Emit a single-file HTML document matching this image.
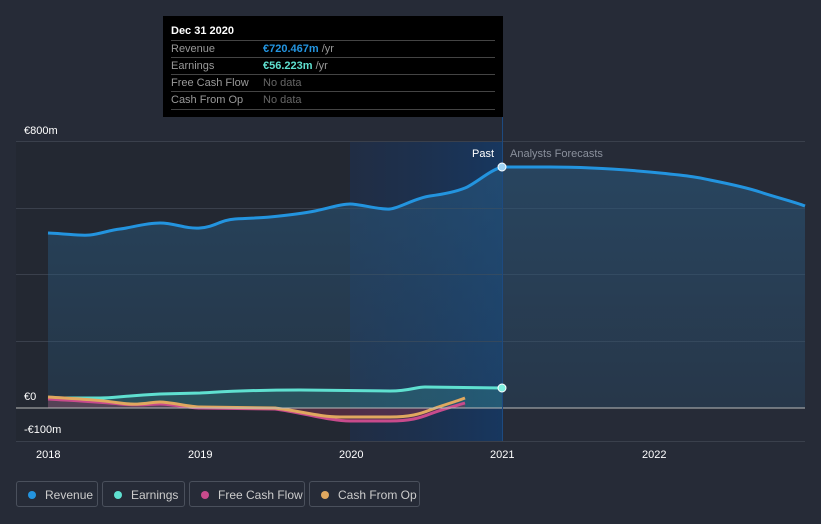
<!DOCTYPE html><html><head><style>
body{margin:0;width:821px;height:524px;background:#262b37;font-family:"Liberation Sans",sans-serif;overflow:hidden;position:relative}
.tt{position:absolute;left:163px;top:16px;width:340px;height:101px;background:#000;}
.tt .h{position:absolute;left:8px;top:9px;color:#fff;font-weight:bold;font-size:11px}
.row{position:absolute;left:8px;width:324px;border-top:1px solid #444;height:17px;font-size:11px;color:#999;line-height:17px}
.row span{position:absolute;left:92px}
.lg{position:absolute;top:481px;height:26px;border:1px solid #4a505c;border-radius:3px;color:#ccc;font-size:12px;line-height:26px;box-sizing:border-box}
.lg i{position:absolute;left:11px;top:9px;width:8px;height:8px;border-radius:50%}
.lg b{font-weight:normal;position:absolute;left:28px}
</style></head><body>
<svg width="821" height="524" style="position:absolute;left:0;top:0">
<defs><linearGradient id="pg" x1="0" x2="1"><stop offset="0" stop-color="#1b2f50" stop-opacity=".5"/><stop offset="1" stop-color="#17375f"/></linearGradient>
<linearGradient id="rf" x1="0" y1="0" x2="0" y2="1"><stop offset="0" stop-color="#2a5a80" stop-opacity=".55"/><stop offset="1" stop-color="#2a5a80" stop-opacity=".25"/></linearGradient></defs>
<rect x="16" y="141" width="334" height="300" fill="#232832"/>
<rect x="350" y="141" width="152" height="300" fill="url(#pg)"/>
<g stroke="#3a404c" stroke-width="1"><line x1="16" y1="141.5" x2="805" y2="141.5"/><line x1="16" y1="208.5" x2="805" y2="208.5"/><line x1="16" y1="274.5" x2="805" y2="274.5"/><line x1="16" y1="341.5" x2="805" y2="341.5"/><line x1="16" y1="441.5" x2="805" y2="441.5"/></g>
<path d="M48,233 C70,234 80,236 90,235 S110,230 120,229 S145,223 160,223 S185,229 200,228 S220,220 235,219 S260,218 270,217 S300,214 315,211 S340,204 350,204 S380,210 390,209 S415,198 430,196 S455,192 465,188 S490,170 502,167 L550,167 C580,167 620,169 660,173 S700,178 710,180 S745,187 760,192 S795,202 805,206 L805,408 L48,408Z" fill="url(#rf)"/>
<path d="M48,233 C70,234 80,236 90,235 S110,230 120,229 S145,223 160,223 S185,229 200,228 S220,220 235,219 S260,218 270,217 S300,214 315,211 S340,204 350,204 S380,210 390,209 S415,198 430,196 S455,192 465,188 S490,170 502,167 L550,167 C580,167 620,169 660,173 S700,178 710,180 S745,187 760,192 S795,202 805,206" fill="none" stroke="#2394df" stroke-width="3"/>
<path d="M48,398 L100,398 C115,398 120,396 160,394 L200,393 C220,392 240,390 300,390 L390,391 C410,391 415,387 425,387 L502,388 L502,408 L48,408Z" fill="#3aa8a0" fill-opacity=".25"/>
<path d="M48,399 C80,401 100,402 120,404 S150,404 160,404 S190,408 200,408 L275,409 C300,412 330,421 350,421 L390,421 C410,421 420,418 430,414 S455,406 465,403 L465,408 L48,408Z" fill="#8a3050" fill-opacity=".45"/>
<path d="M48,398 L100,398 C115,398 120,396 160,394 L200,393 C220,392 240,390 300,390 L390,391 C410,391 415,387 425,387 L502,388" fill="none" stroke="#5fe0d0" stroke-width="3"/>
<path d="M48,399 C80,401 100,402 120,404 S150,404 160,404 S190,408 200,408 L275,409 C300,412 330,421 350,421 L390,421 C410,421 420,418 430,414 S455,406 465,403" fill="none" stroke="#c84b8c" stroke-width="3"/>
<path d="M48,397 C80,399 100,400 120,403 S150,402 160,402 S190,407 200,407 L275,408 C300,411 320,417 340,417 L390,417 C410,417 420,414 430,410 S455,402 465,398" fill="none" stroke="#e0a85f" stroke-width="3"/>
<line x1="16" y1="408" x2="805" y2="408" stroke="#bbb" stroke-width="1"/>
<line x1="502.5" y1="117" x2="502.5" y2="441" stroke="#1d4a80" stroke-width="1"/>
<circle cx="502" cy="167" r="4" fill="#9fd4f5" stroke="#fff" stroke-width="1"/>
<circle cx="502" cy="388" r="4" fill="#7ff0e0" stroke="#fff" stroke-width="1"/>
<g font-size="11" fill="#fff"><text x="24" y="134">€800m</text><text x="24" y="400">€0</text><text x="24" y="433">-€100m</text>
<text x="36" y="458">2018</text><text x="188" y="458">2019</text><text x="339" y="458">2020</text><text x="490" y="458">2021</text><text x="642" y="458">2022</text>
<text x="472" y="157">Past</text><text x="510" y="157" fill="#8a909c">Analysts Forecasts</text></g>
</svg>
<div class="tt"><div class="h">Dec 31 2020</div>
<div class="row" style="top:24px">Revenue<span><b style="color:#2394df">€720.467m</b> /yr</span></div>
<div class="row" style="top:41px">Earnings<span><b style="color:#5fe0d0">€56.223m</b> /yr</span></div>
<div class="row" style="top:58px">Free Cash Flow<span style="color:#666">No data</span></div>
<div class="row" style="top:75px;border-bottom:1px solid #444">Cash From Op<span style="color:#666">No data</span></div>
</div>
<div class="lg" style="left:16px;width:82px"><i style="background:#2394df"></i><b>Revenue</b></div>
<div class="lg" style="left:102px;width:83px"><i style="background:#5fe0d0"></i><b>Earnings</b></div>
<div class="lg" style="left:189px;width:116px"><i style="background:#c84b8c"></i><b>Free Cash Flow</b></div>
<div class="lg" style="left:309px;width:111px"><i style="background:#e0a85f"></i><b>Cash From Op</b></div>
</body></html>
